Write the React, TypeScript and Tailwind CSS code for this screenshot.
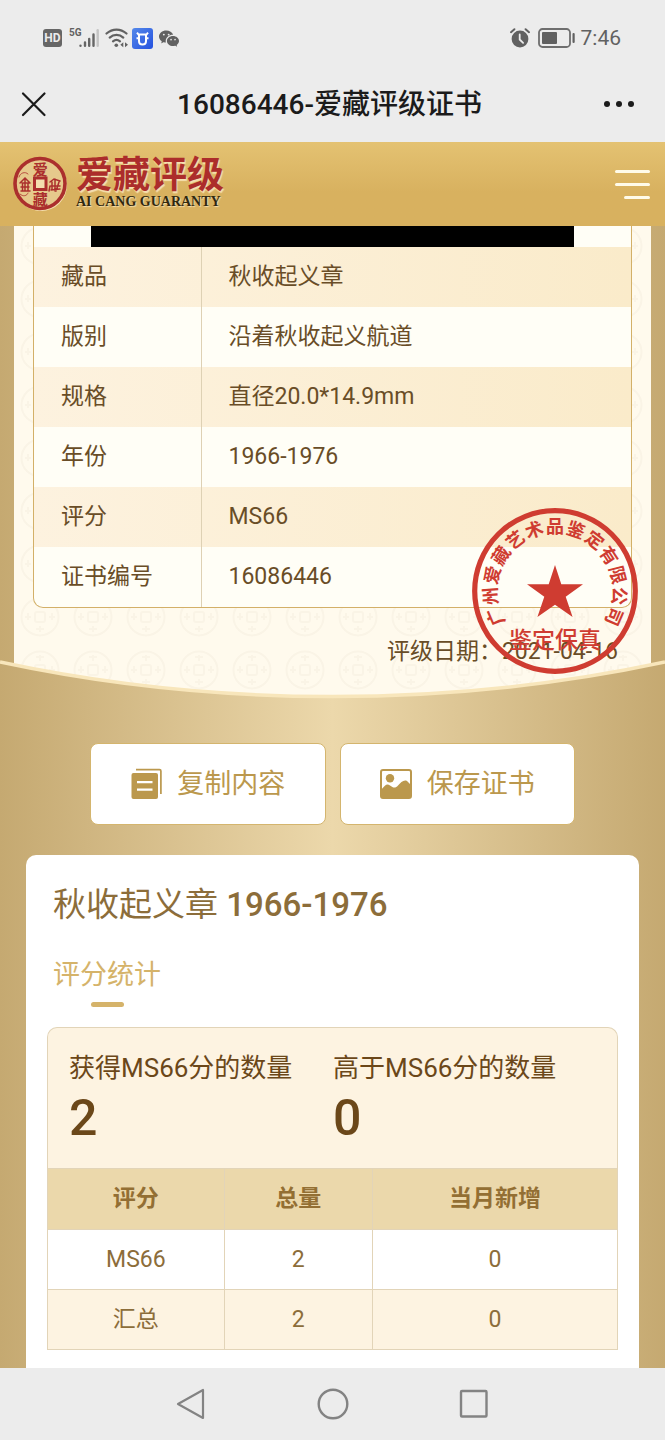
import { BsWechat } from 'react-icons/bs';

const DETAILS = [
  { label: '藏品', value: '秋收起义章' },
  { label: '版别', value: '沿着秋收起义航道' },
  { label: '规格', value: '直径20.0*14.9mm' },
  { label: '年份', value: '1966-1976' },
  { label: '评分', value: 'MS66' },
  { label: '证书编号', value: '16086446' },
];

const SCORES = [
  { score: 'MS66', total: 2, added: 0 },
  { score: '汇总', total: 2, added: 0 },
];

const COMPANY = '广州爱藏艺术品鉴定有限公司';

function StatusBar() {
  return (
    <div className="flex h-[76px] items-center justify-between pr-11 pl-[43px] text-[#616161]">
      <div className="flex items-center">
        <span className="flex h-[18px] w-[19px] items-center justify-center rounded-[3px] bg-[#666] text-[12px] font-bold text-[#ececec]">
          HD
        </span>
        <span className="ml-[7px] w-2.5 self-start text-[10px] leading-[10px] font-bold">5G</span>
        <svg className="h-5 w-5" viewBox="0 0 20 20" fill="none" strokeWidth="2.4" strokeLinecap="round">
          <path d="M1.5 17.6v.2M6 14.5v3.3M10.2 11v6.8M14.5 6.5v11.3" stroke="#666" />
          <path d="M18.7 2.2v15.6" stroke="#c4c4c4" />
        </svg>
        <svg className="ml-1.5 h-5 w-6" viewBox="0 0 24 20" fill="none" stroke="#626262" strokeWidth="2.2" strokeLinecap="round">
          <path d="M1.5 5.500C7.500.2 15.500.2 21.500 5.500" />
          <path d="M4.7 9.6c4-3.6 9.6-3.6 13.6 0" />
          <path d="M8 13.4c2.2-1.9 4.8-1.9 7 0" />
          <circle cx="11.3" cy="17.3" r="1.8" fill="#626262" stroke="none" />
          <path d="M18.3 14.3v5l-3-2.5zM20 14.3v5l3-2.5z" fill="#626262" stroke="none" />
        </svg>
        <svg className="ml-[3px] h-[21px] w-[21px]" viewBox="0 0 21 21">
          <defs>
            <linearGradient id="app" x1="0" y1="0" x2="1" y2="1">
              <stop stopColor="#5589ea" />
              <stop offset="1" stopColor="#2451df" />
            </linearGradient>
          </defs>
          <rect width="21" height="21" rx="3" fill="url(#app)" />
          <path d="M5 4.600l1.500 1.900h8l1.500-1.900M7 6.500v6.500q0 3.500 3.500 3.500t3.500-3.500v-6.500M4.500 10.200h2.500M14 10.200h2.500" fill="none" stroke="#fff" strokeWidth="2" />
        </svg>
        <BsWechat className="ml-[6px] h-5 w-5" />
      </div>
      <div className="flex items-center">
        <svg className="h-5 w-5" viewBox="0 0 20 20" fill="none" strokeLinecap="round">
          <circle cx="10" cy="11" r="8.4" fill="#616161" />
          <path d="M1 4.2L4.4 1.2M15.6 1.2L19 4.2" stroke="#616161" strokeWidth="2" />
          <path d="M9.7 6.5v5l3.4 3.3" stroke="#ececec" strokeWidth="1.8" />
        </svg>
        <svg className="ml-2 h-5 w-[37px]" viewBox="0 0 37 20">
          <rect x="1" y="1" width="31" height="18" rx="3.5" fill="none" stroke="#6e6e6e" strokeWidth="1.8" />
          <rect x="4" y="4" width="15" height="12" rx="1" fill="#616161" />
          <rect x="34.5" y="5" width="2.2" height="10" rx="1" fill="#616161" />
        </svg>
        <span className="ml-1.5 text-[21px] leading-6">7:46</span>
      </div>
    </div>
  );
}

function TitleBar() {
  return (
    <div className="flex h-[66px] items-center justify-between pr-[26px] pb-2 pl-5 text-[#1b1b1b]">
      <button type="button" aria-label="关闭" className="flex w-9 items-center">
        <svg className="h-7 w-7" viewBox="0 0 28 28" fill="none" stroke="currentColor" strokeWidth="2.2" strokeLinecap="round">
          <path d="M3 2.500l21.500 21.500M24.500 2.500L3 24" />
        </svg>
      </button>
      <h1 className="text-[28px] leading-10 font-medium">16086446-爱藏评级证书</h1>
      <button type="button" aria-label="更多" className="flex w-9 items-center justify-end">
        <svg className="h-2 w-9" viewBox="0 0 36 8" fill="currentColor">
          <circle cx="4" cy="3" r="3" />
          <circle cx="16" cy="3" r="3" />
          <circle cx="28" cy="3" r="3" />
        </svg>
      </button>
    </div>
  );
}

function CoinMark() {
  return (
    <svg className="h-14 w-14" viewBox="0 0 56 56" fontFamily='"Noto Sans CJK SC", sans-serif' fontWeight="700" textAnchor="middle">
      <circle cx="28" cy="29" r="26" fill="#f6e3b4" />
      <circle cx="27" cy="27.5" r="25" fill="#e6c98c" stroke="#ab2f2d" strokeWidth="3.6" />
      <rect x="21.5" y="22" width="11.5" height="11.5" fill="#f3dfae" stroke="#ab2f2d" strokeWidth="3" />
      <g fill="#ab2f2d" fontSize="15">
        <text x="27.2" y="18.5">爱</text>
        <text x="27.2" y="48.5">藏</text>
      </g>
      <g fill="none" stroke="#ab2f2d" strokeWidth="1.5" strokeLinecap="round">
        <path d="M7 27l5-5 5 5M9 27h7M12 24v11M8 31h8M8 35h9M9.5 27v8M15 27v8" />
        <path d="M37 26l4-3 6 2M38 30h9M42 23v12M38 34l9-1M46 26l-3 9M37 30l-1 5M39 26v8" />
        <path d="M6 21c1-4 6-6 9-3M7 38c3 3 7 2 8-1" strokeWidth=".8" />
      </g>
    </svg>
  );
}

function SiteHeader() {
  return (
    <header className="flex h-[84px] items-center justify-between bg-linear-to-b from-[#e4c272] to-[#d8b15f] to-60% pr-[15px] pl-[13px]">
      <a href="#" className="flex items-center gap-[7px]">
        <CoinMark />
        <span className="flex flex-col">
          <span className="text-[37px] leading-9 font-bold text-[#ac2d2b] [text-shadow:1px_2px_1px_#f5dfb0]">爱藏评级</span>
          <span className="font-['Liberation_Serif',serif] text-[14px] leading-4 font-bold text-[#30290f] [text-shadow:1px_1px_1px_#f5dfb0]">
            AI CANG GUARANTY
          </span>
        </span>
      </a>
      <button type="button" aria-label="菜单" className="flex w-[35px] flex-col items-end gap-2.5">
        <span className="h-[3px] w-full rounded-sm bg-[#fffbe9]" />
        <span className="h-[3px] w-full rounded-sm bg-[#fffbe9]" />
        <span className="h-[3px] w-[26px] rounded-sm bg-[#fffbe9]" />
      </button>
    </header>
  );
}

function Seal() {
  return (
    <svg
      className="absolute -right-1.5 -bottom-[66px] h-[166px] w-[166px]"
      viewBox="-83 -83 166 166"
      fill="#cf3c31"
      fontFamily='"Noto Sans CJK SC", sans-serif'
      fontWeight="700"
      textAnchor="middle"
    >
      <circle r="80.3" fill="none" stroke="#cf3c31" strokeWidth="5.2" />
      <path d="M0-26L6.3-6.8H28L10.7 5.7 17.6 26 0 13.8-17.6 26-10.7 5.7-28-6.8H-6.3z" />
      {[...COMPANY].map((char, i) => (
        <text key={i} fontSize="18" y="-58" transform={`rotate(${(i - 6) * 18.9})`}>
          {char}
        </text>
      ))}
      <text y="57" fontSize="23" fontWeight="500">鉴定保真</text>
    </svg>
  );
}

// faint coin watermark behind the certificate
function Watermark() {
  return (
    <svg className="absolute inset-0 h-full w-full" fill="none" stroke="#faf4e6">
      <defs>
        <pattern id="coins" width="53" height="53" patternUnits="userSpaceOnUse" y="47">
          <circle cx="26" cy="26" r="18.5" strokeWidth="2" />
          <rect x="21" y="21" width="10" height="10" rx="2" strokeWidth="2" />
          <path d="M26 11v6M26 35v6M11 26h6M35 26h6M22 13h8M22 38h8M14 22v7M38 22v7" strokeWidth="2" />
        </pattern>
      </defs>
      <rect width="100%" height="100%" fill="url(#coins)" stroke="none" />
    </svg>
  );
}

function Certificate() {
  return (
    <section className="relative h-[474px] px-3.5">
      <div className="relative h-full bg-[#fffaed] px-[19px]">
        <Watermark />
        <div className="relative">
          <div className="overflow-hidden rounded-b-[10px] border border-t-0 border-[#d3b068] bg-[#fffef6]">
            <div className="mx-[57px] h-[21px] bg-black" />
            <table className="w-full table-fixed text-left text-[23px] leading-8 text-[#694d27]">
              <colgroup>
                <col className="w-[167px]" />
                <col />
              </colgroup>
              <tbody>
                {DETAILS.map((item) => (
                  <tr key={item.label} className="h-15 odd:bg-linear-to-r odd:from-[#fdf2df] odd:to-[#faebca]">
                    <th scope="row" className="border-r border-[#ded1b4] pl-[27px] font-normal">{item.label}</th>
                    <td className="pl-[27px]">{item.value}</td>
                  </tr>
                ))}
              </tbody>
            </table>
          </div>
          <p className="absolute top-full right-3.5 mt-7 text-[23px] leading-8 text-[#694d27]">评级日期：2021-04-16</p>
          <Seal />
        </div>
      </div>
      <svg className="absolute inset-x-0 bottom-0 h-10 w-full" viewBox="0 0 665 40" preserveAspectRatio="none">
        <defs>
          <linearGradient id="gold">
            <stop stopColor="#c5a971" />
            <stop offset=".5" stopColor="#ecd8ab" />
            <stop offset="1" stopColor="#c5a971" />
          </linearGradient>
        </defs>
        <path d="M0 2C215 48 450 48 665 2V40H0z" fill="url(#gold)" />
        <path d="M0 2C215 48 450 48 665 2" fill="none" stroke="#f8e6bb" strokeWidth="3.5" />
      </svg>
    </section>
  );
}

function Actions() {
  const button =
    'flex h-[82px] flex-1 items-center justify-center gap-[15px] rounded-lg border border-[#d4b56e] bg-white text-[27px] text-[#bb984d]';
  return (
    <div className="flex gap-3.5 px-[90px] pt-[43px] pb-[30px]">
      <button type="button" className={button}>
        <svg className="h-8 w-8" viewBox="0 0 32 32" fill="currentColor">
          <path d="M6 1.600h23.500q1.400 0 1.400 1.400v23" fill="none" stroke="currentColor" strokeWidth="1.7" />
          <rect x="1.500" y="5" width="26.500" height="26" rx="2" />
          <path d="M7 14.200h15.500M7 21.700h15.500" stroke="#fff" strokeWidth="2.2" />
        </svg>
        复制内容
      </button>
      <button type="button" className={button}>
        <svg className="h-8 w-8" viewBox="0 0 32 32" fill="currentColor">
          <rect x="1" y="2" width="30" height="28" rx="2" fill="none" stroke="currentColor" strokeWidth="2" />
          <circle cx="10" cy="10.2" r="4.2" />
          <path d="M1 22c4-5 6-7 9-4.500 3 2 5 3.500 8 0s7-7 10-3.500l3 3V30H1z" />
        </svg>
        保存证书
      </button>
    </div>
  );
}

function StatItem({ label, value }: { label: string; value: number }) {
  return (
    <div>
      <dt className="text-[26px] leading-10">{label}</dt>
      <dd className="text-[50px] leading-[60px] font-medium">{value}</dd>
    </div>
  );
}

function Stats() {
  return (
    <section className="mx-[26px] rounded-t-[10px] bg-white px-[21px] pb-[18px]">
      <h2 className="px-1.5 pt-[25px] text-[33px] leading-[50px] font-medium text-[#8c6d3a]">
        <span className="font-normal">秋收起义章 </span>1966-1976
      </h2>
      <div className="px-1.5 pt-[25px] pb-5">
        <button type="button" className="flex flex-col items-center text-[#d5b36a]">
          <span className="text-[27px] leading-10">评分统计</span>
          <span className="mt-[7px] h-[5px] w-[33px] rounded-full bg-[#d5b36a]" />
        </button>
      </div>
      <div className="overflow-hidden rounded-t-[10px] border border-b-0 border-[#e2d4b8] bg-[#fdf3e1]">
        <dl className="grid grid-cols-[264px_1fr] px-[21px] py-5 text-[#6b4719]">
          <StatItem label="获得MS66分的数量" value={2} />
          <StatItem label="高于MS66分的数量" value={0} />
        </dl>
      </div>
      <table className="w-full table-fixed border-collapse text-center text-[23px] leading-8 text-[#8c6d3a]">
        <colgroup>
          <col className="w-[31%]" />
          <col className="w-[26%]" />
          <col />
        </colgroup>
        <thead className="bg-[#ebd8ab] text-[#936f33]">
          <tr className="h-[61px]">
            {['评分', '总量', '当月新增'].map((title) => (
              <th key={title} scope="col" className="border border-[#e2d4b8] font-bold">{title}</th>
            ))}
          </tr>
        </thead>
        <tbody>
          {SCORES.map((row) => (
            <tr key={row.score} className="h-15 even:bg-[#fdf3e1]">
              <td className="border border-[#e2d4b8]">{row.score}</td>
              <td className="border border-[#e2d4b8]">{row.total}</td>
              <td className="border border-[#e2d4b8]">{row.added}</td>
            </tr>
          ))}
        </tbody>
      </table>
    </section>
  );
}

function NavBar() {
  return (
    <nav className="flex h-[72px] items-center justify-center gap-[109px] bg-[#ececec] text-[#838383]">
      <button type="button" aria-label="返回">
        <svg className="h-8 w-8" viewBox="0 0 32 32" fill="none" stroke="currentColor" strokeWidth="2.2" strokeLinejoin="round">
          <path d="M27 2v28L2 16z" />
        </svg>
      </button>
      <button type="button" aria-label="主页">
        <svg className="h-8 w-8" viewBox="0 0 32 32" fill="none" stroke="currentColor" strokeWidth="2.4">
          <circle cx="16" cy="16" r="14.3" />
        </svg>
      </button>
      <button type="button" aria-label="最近任务">
        <svg className="h-8 w-8" viewBox="0 0 32 32" fill="none" stroke="currentColor" strokeWidth="2.4">
          <rect x="3" y="3" width="25.5" height="25.5" rx="1" />
        </svg>
      </button>
    </nav>
  );
}

export default function App() {
  return (
    <div className="min-h-screen bg-[#ececec] font-[Roboto,'Noto_Sans_CJK_SC',sans-serif]">
      <StatusBar />
      <TitleBar />
      <SiteHeader />
      <main className="bg-linear-to-r from-[#c5a971] via-[#ecd8ab] to-[#c5a971]">
        <Certificate />
        <Actions />
        <Stats />
      </main>
      <NavBar />
    </div>
  );
}
